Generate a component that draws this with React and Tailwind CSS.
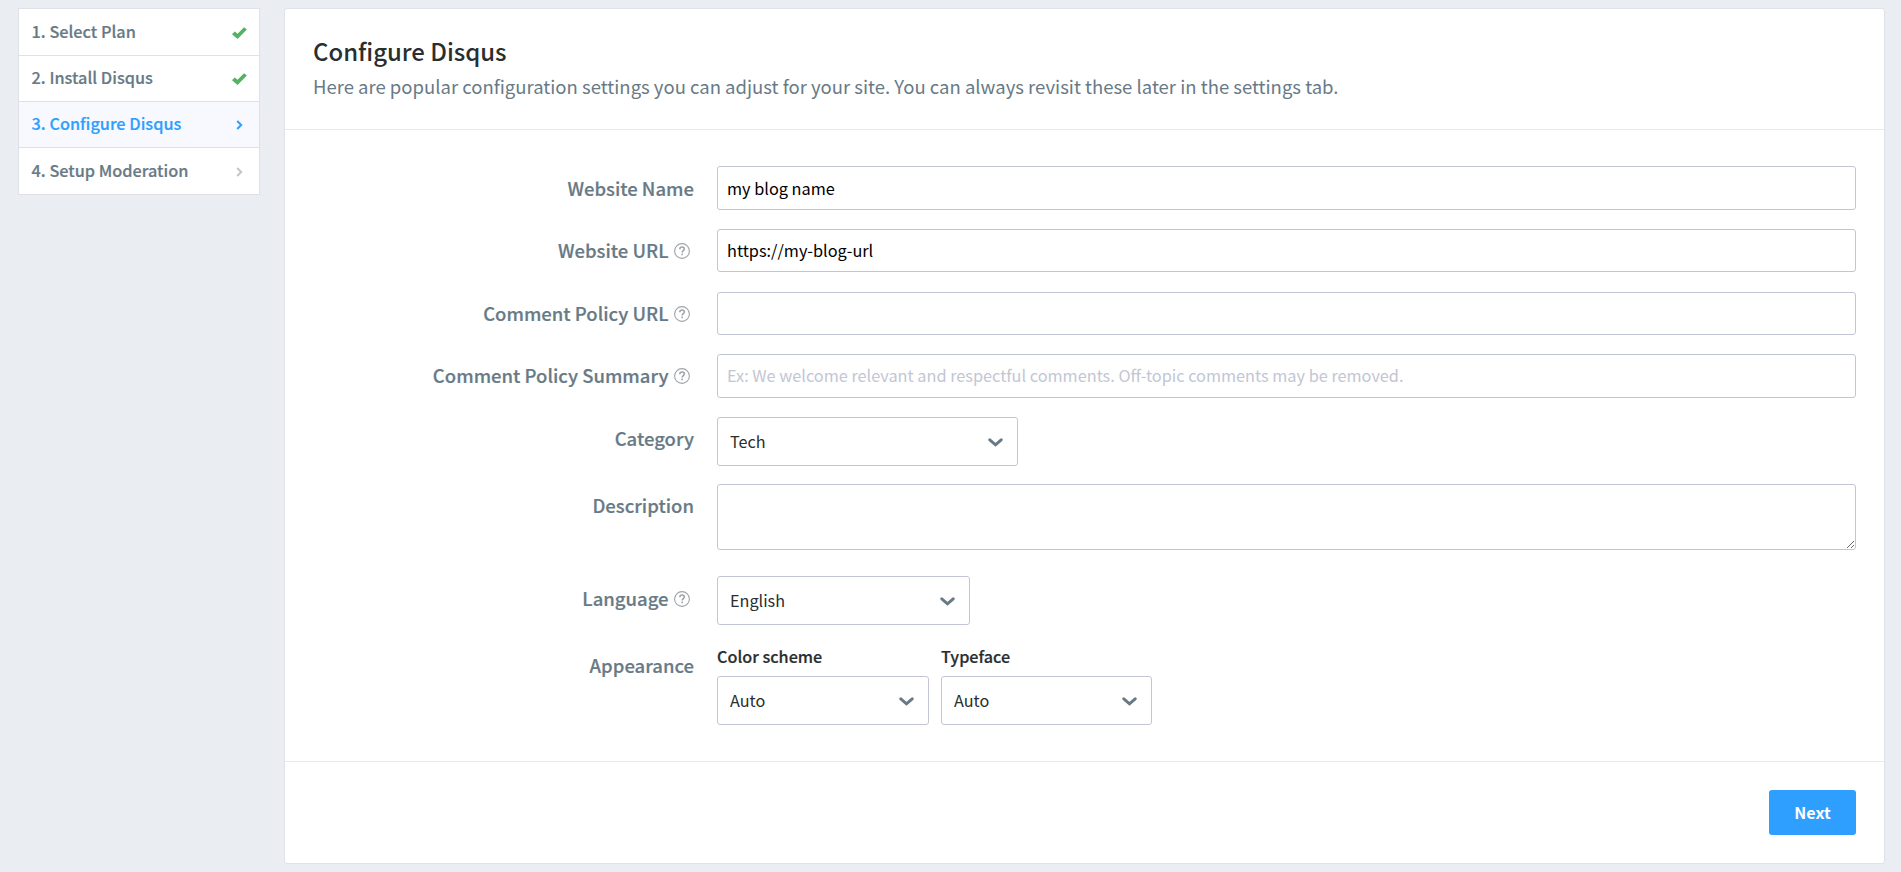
import React from "react";

const steps = [
  { label: "1. Select Plan", state: "done", box: "h-[47px]", text: "pb-[2px]" },
  { label: "2. Install Disqus", state: "done", box: "h-[46px]", text: "pb-[3px]" },
  { label: "3. Configure Disqus", state: "active", box: "h-[46px]", text: "pb-[3px]" },
  { label: "4. Setup Moderation", state: "todo", box: "h-[47px]", text: "pb-[2px]" },
];

function Check() {
  return (
    <svg className="mt-px h-[12px] w-[15px]" viewBox="0 0 15 12" fill="#53b364">
      <path d="M0 7.2 2.7 4.4 5.6 6.8 12 0.2 14.9 2.6 5.6 12Z" />
    </svg>
  );
}

function Chevron({ active }) {
  return (
    <svg
      className={"mr-[4px] mt-px h-[10px] w-[7px] " + (active ? "text-[#2e9fff]" : "text-[#c2c6cc]")}
      viewBox="0 0 7 10"
      fill="none"
      stroke="currentColor"
      strokeWidth="2"
    >
      <path d="M1.2 1 5.2 5 1.2 9" />
    </svg>
  );
}

function Help() {
  return (
    <svg className="relative top-[1px] ml-[5px] mr-[4.5px] h-4 w-4 shrink-0" viewBox="0 0 16 16" fill="none" stroke="#a0a4a8">
      <circle cx="8" cy="8" r="7.4" strokeWidth="1.1" />
      <path d="M5.8 6.2C5.8 4.8 6.8 4 8.1 4S10.3 4.8 10.3 6C10.3 7.5 8.2 7.6 8.2 9.4" strokeWidth="1.6" />
      <path d="M8.2 10.6V12.2" strokeWidth="1.7" />
    </svg>
  );
}

function Row({ label, help, className, labelClass, children }) {
  return (
    <div className={"flex items-start " + className}>
      <div className={"flex w-[381px] shrink-0 items-center justify-end text-[18.5px] font-medium leading-[24px] text-[#687a86] [-webkit-text-stroke:0.2px] " + labelClass}>
        <span className="whitespace-nowrap">{label}</span>
        {help && <Help />}
      </div>
      <div className="ml-[23px] flex min-w-0 flex-1">{children}</div>
    </div>
  );
}

const field =
  "block w-full rounded-[3px] border border-[#c2c6d4] bg-white px-[9px] text-[16.3px] text-black outline-none placeholder:text-[#c2c6d4] placeholder:opacity-100 ";

function Select({ value, className }) {
  return (
    <button
      type="button"
      className={"flex h-[49px] items-center justify-between rounded-[3px] border border-[#c2c6d4] bg-white pl-[12px] pr-[14px] text-[16.2px] leading-[24px] text-[#2a2e2e] " + className}
    >
      <span className="pb-[2px]">{value}</span>
      <svg className="mt-px h-[9px] w-[15px]" viewBox="0 0 15 9" fill="none" stroke="#687a86" strokeWidth="3">
        <path d="M1.8 1.8 7.5 6.8 13.2 1.8" strokeLinecap="round" />
      </svg>
    </button>
  );
}

export default function App() {
  return (
    <div className="flex h-[872px] w-full items-start bg-[#eaedf2] pl-[18px] pr-[16px] pt-[8px] font-['Noto_Sans_CJK_SC',sans-serif]">
      <nav className="w-[242px] shrink-0 border border-b-0 border-[#dfe0e8] bg-white">
        {steps.map((s) => (
          <div
            key={s.label}
            className={
              "flex items-center justify-between border-b border-[#dfe0e8] pl-[12.6px] pr-[12px] text-[16.3px] font-medium leading-[24px] " +
              s.box +
              (s.state === "active" ? " bg-[#f7f9fe] text-[#2e9fff]" : " text-[#687a86]")
            }
          >
            <span className={"[-webkit-text-stroke:0.2px] " + s.text}>{s.label}</span>
            {s.state === "done" ? <Check /> : <Chevron active={s.state === "active"} />}
          </div>
        ))}
      </nav>

      <main className="ml-[24px] flex h-[856px] min-w-0 flex-1 flex-col rounded-[3px] border border-[#dfe2ea] bg-white">
        <header className="h-[121px] border-b border-[#e9eaee] pl-[28px] pt-[25px]">
          <h1 className="text-[23.9px] font-medium leading-[34px] text-[#2a2e2e]">Configure Disqus</h1>
          <p className="text-[18.5px] leading-[36px] text-[#687a86]">
            Here are popular configuration settings you can adjust for your site. You can always revisit these later in the settings tab.
          </p>
        </header>

        <form className="flex h-[632px] flex-col border-b border-[#e9eaee] pl-[28px] pr-[28px] pt-[36px]">
          <Row label="Website Name" className="h-[63px]" labelClass="pt-[10px]">
            <input className={field + "h-[44px]"} defaultValue="my blog name" />
          </Row>
          <Row label="Website URL" help className="h-[63px]" labelClass="pt-[9px]">
            <input className={field + "h-[43px] pb-[2px]"} defaultValue="https://my-blog-url" />
          </Row>
          <Row label="Comment Policy URL" help className="h-[62px]" labelClass="pt-[9px]">
            <input className={field + "h-[43px]"} />
          </Row>
          <Row label="Comment Policy Summary" help className="h-[63px]" labelClass="pt-[9px]">
            <input
              className={field + "h-[44px] pb-[2px]"}
              placeholder="Ex: We welcome relevant and respectful comments. Off-topic comments may be removed."
            />
          </Row>
          <Row label="Category" className="h-[67px]" labelClass="pt-[9px]">
            <Select value="Tech" className="w-[301px]" />
          </Row>
          <Row label="Description" className="h-[92px]" labelClass="pt-[9px]">
            <textarea className={field + "h-[66px] resize-y"} />
          </Row>
          <Row label="Language" help className="h-[70px]" labelClass="pt-[10px]">
            <Select value="English" className="w-[253px]" />
          </Row>
          <Row label="Appearance" className="h-[79px]" labelClass="pt-[7px]">
            <div className="w-[212px]">
              <div className="h-[30px] text-[16.2px] font-medium leading-[20px] text-[#2a2e2e] [-webkit-text-stroke:0.2px]">Color scheme</div>
              <Select value="Auto" className="w-full" />
            </div>
            <div className="ml-[12px] w-[211px]">
              <div className="h-[30px] text-[16.2px] font-medium leading-[20px] text-[#2a2e2e] [-webkit-text-stroke:0.2px]">Typeface</div>
              <Select value="Auto" className="w-full" />
            </div>
          </Row>
        </form>

        <footer className="flex justify-end pr-[28px] pt-[28px]">
          <button type="button" className="h-[45px] w-[87px] rounded-[3px] bg-[#2e9fff] pb-[2px] text-[16px] font-bold text-white">
            Next
          </button>
        </footer>
      </main>
    </div>
  );
}
